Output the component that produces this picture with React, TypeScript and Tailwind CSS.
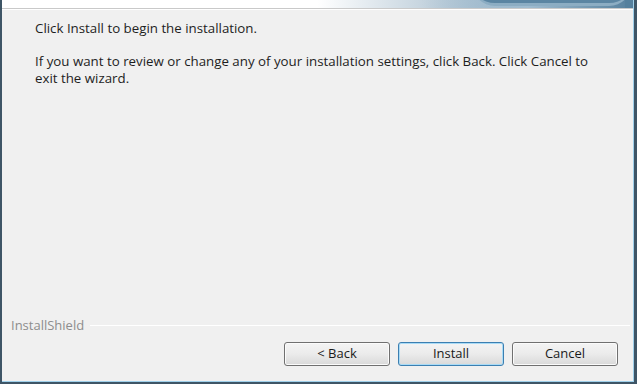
import React from 'react';

function WizardButton({ label, isDefault }: { label: string; isDefault?: boolean }) {
  return (
    <button
      type="button"
      className={`w-[106px] h-[24px] rounded-[3px] border text-[13px] text-[#1a1a1a] bg-gradient-to-b from-[#f4f4f4] via-[#ebebeb] to-[#d9d9d9] ${
        isDefault ? 'border-[#3c7fb1] shadow-[inset_0_0_0_1px_#a9dbf6]' : 'border-[#707070] shadow-[inset_0_0_0_1px_#fbfbfb]'
      }`}
    >
      {label}
    </button>
  );
}

export default function App() {
  return (
    <div
      className="w-[637px] h-[384px] flex bg-[#3e5566]"
      style={{ fontFamily: '"Open Sans", "Noto Sans", sans-serif' }}
    >
      <div className="flex-1 flex flex-col ml-[2px] mr-[3px] mb-[2px] border-r border-b border-[#9fd0ea] bg-[#f0f0f0]">
        {/* banner edge */}
        <div className="relative h-[8px] bg-gradient-to-r from-white via-[#ffffff] to-[#5a84a1] overflow-hidden">
          <div className="absolute inset-y-0 left-[420px] right-0 bg-gradient-to-r from-[#ffffff00] via-[#9fbcd0] to-[#56809d]" />
          <div className="absolute left-[470px] top-[-40px] w-[160px] h-[46px] rounded-full border-b-[3px] border-[#8cadc3] bg-[#5b85a2]" />
          <div className="absolute inset-y-0 right-0 w-[8px] bg-[#55809d]" />
        </div>
        <div className="h-px bg-[#c9c9c9]" />
        <div className="h-px bg-white" />

        <div className="flex-1 flex flex-col pl-[33px] pr-[40px] pt-[10px] text-[13.3px] leading-[17px] text-[#1e1e1e]">
          <p>Click Install to begin the installation.</p>
          <p className="mt-[16px]">
            If you want to review or change any of your installation settings, click Back. Click Cancel to exit the
            wizard.
          </p>
        </div>

        <div className="flex items-center gap-[6px] pl-[9px] pr-[3px] text-[13px] leading-[17px] text-[#8d8d8d]">
          <span>InstallShield</span>
          <div className="flex-1 h-px bg-[#a8a8a8] border-b border-white" />
        </div>

        <div className="flex justify-end gap-[8px] pr-[15px] pt-[8px] pb-[15px]">
          <WizardButton label="< Back" />
          <WizardButton label="Install" isDefault />
          <WizardButton label="Cancel" />
        </div>
      </div>
    </div>
  );
}
